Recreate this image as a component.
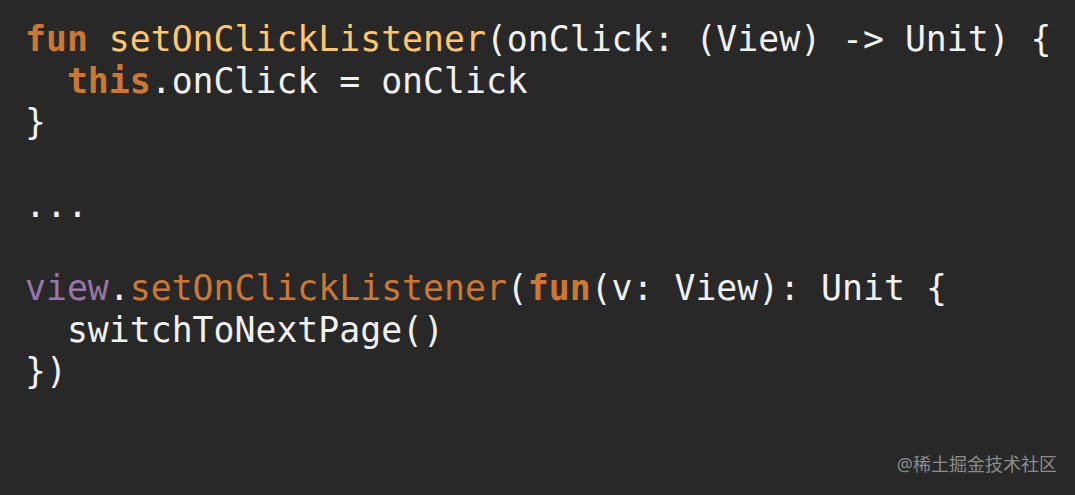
import React from 'react';

const kw = 'text-[#cc7832] font-bold';
const fnDecl = 'text-[#ffc66d]';
const fnCall = 'text-[#cc7832]';
const prop = 'text-[#9876aa]';

export default function App() {
  return (
    <div className="relative w-[1075px] h-[495px] overflow-hidden bg-[#282828]">
      <pre className="pl-[25px] pt-[19px] text-[34.8px] leading-[41.5px] text-[#f0f0f0] font-['DejaVu_Sans_Mono','Liberation_Mono',monospace] whitespace-pre">
        <div>
          <span className={kw}>fun</span> <span className={fnDecl}>setOnClickListener</span>(onClick: (View) -&gt; Unit) {'{'}
        </div>
        <div>
          {'  '}<span className={kw}>this</span>.onClick = onClick
        </div>
        <div>{'}'}</div>
        <div>{' '}</div>
        <div>...</div>
        <div>{' '}</div>
        <div>
          <span className={prop}>view</span>.<span className={fnCall}>setOnClickListener</span>(<span className={kw}>fun</span>(v: View): Unit {'{'}
        </div>
        <div>{'  '}switchToNextPage()</div>
        <div>{'})'}</div>
      </pre>
      <div className="absolute right-[18px] bottom-[17px] text-[18px] text-[#8c8c8c] font-['Noto_Sans','Noto_Sans_CJK_SC',sans-serif]">
        @稀土掘金技术社区
      </div>
    </div>
  );
}
